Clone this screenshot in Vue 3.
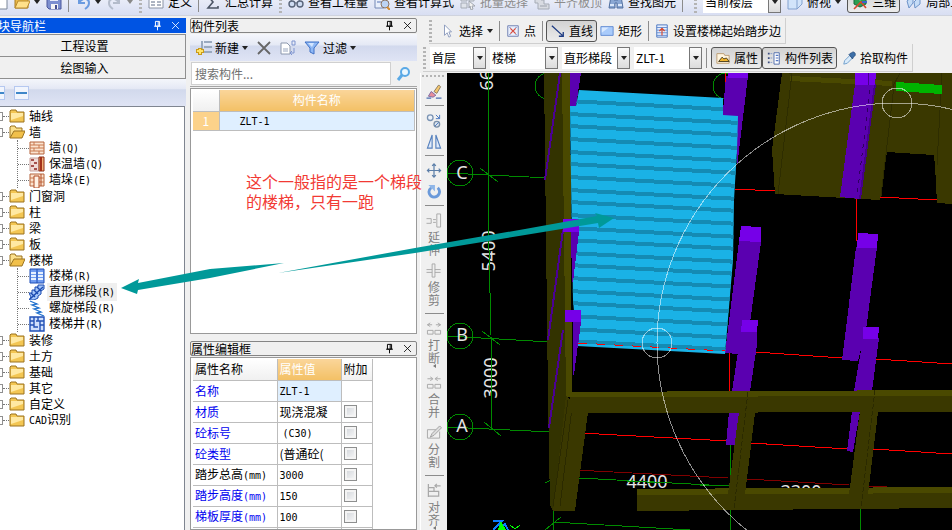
<script setup>
import { h, ref } from 'vue'

// 图标路径，统一 16x16 画布
const icons = {
  doc: '<path d="M1 1h10l4 4v10H1z" fill="#fff" stroke="#7a8699"/>',
  folder: '<path d="M1 14V3h5l1 2h7v9z" fill="#e9b949" stroke="#a87a20"/><path d="M1 14 4 7h12l-3 7z" fill="#ffe08a" stroke="#b98a2c"/>',
  save: '<path d="M1 1h14v14H3l-2-2z" fill="#7c8fd0" stroke="#4a569c"/><path d="M4 2h8v5H4z" fill="#e8ecfa"/><path d="M5 10h7v5H5z" fill="#f4f4f4"/><path d="M9 11h2v4H9z" fill="#444e90"/>',
  undo: '<path d="M4 3v6h6M4 9c3-6 10-5 10 0 0 2-1 4-4 6" fill="none" stroke="#6b9be0" stroke-width="2"/>',
  redo: '<path d="M12 3v6H6M12 9C9 3 2 4 2 9c0 2 1 4 4 6" fill="none" stroke="#b4bccb" stroke-width="2"/>',
  define: '<path d="M1 1h14v13H1z" fill="#fff" stroke="#8a93a5"/><path d="M3 8h4M3 11h4M9 8h4M9 11h4M9 5h4" stroke="#5d6b85" stroke-width="1"/>',
  sigma: '<path d="M13 4V2H3l5 6-5 6h10v-2" fill="none" stroke="#4c5566" stroke-width="1.6"/>',
  glasses: '<circle cx="4" cy="10" r="3" fill="#cfdcf2" stroke="#59657a" stroke-width="1.4"/><circle cx="12" cy="10" r="3" fill="#cfdcf2" stroke="#59657a" stroke-width="1.4"/><path d="M3 7 5 3M11 7l2-4M7 9h2" stroke="#59657a"/>',
  formula: '<path d="M1 1h9v13H1z" fill="#e9effb" stroke="#7488b5"/><path d="M3 5h5M3 8h4" stroke="#5773b5"/><circle cx="11" cy="10" r="4" fill="#bcd3f4" stroke="#8a7466"/><path d="m13 13 3 3" stroke="#d58a2e" stroke-width="2"/>',
  batch: '<path d="M1 2h6v5H1zM1 9h6v5H1zM9 2h5v5H9z" fill="#dfe3ea" stroke="#a5abb5"/><path d="m9 7 6 5h-3l1 3-2 1-1-4-1 2z" fill="#f2f2f2" stroke="#a0a5ae"/>',
  level: '<path d="M1 2h6v4h3v4h5v5H4V9H1z" fill="#d8dbe2" stroke="#a5abb5"/><path d="M6 12h7M10 4h5" stroke="#9ba1ac"/>',
  find: '<path d="M3 2h3v4h4V2h3l2 12H9V9H7v5H1z" fill="#8ba7d3" stroke="#516f9f"/><path d="M2 11h4M10 11h4" stroke="#dbe7fa" stroke-width="2"/>',
  cube: '<path d="M1 5 6 1h9v9l-5 5H1z" fill="#d2e4fa" stroke="#83a2cf"/><path d="M1 5h9v10M10 5l5-4" fill="none" stroke="#83a2cf"/>',
  view3d: '<path d="m8 1 6 3v6l-6 3-6-3V4z" fill="#2c9e50" stroke="#17693a"/><path d="M2 15 9 8l5 6" fill="none" stroke="#d7472d" stroke-width="1.6"/><path d="m4 4 4 2 5-2" fill="none" stroke="#b6e8c4"/><path d="M10 8h5" stroke="#3f62c9" stroke-width="2"/>',
  part3d: '<path d="m1 7 6-5v7l-4 5zM8 8l6-6v8l-5 4z" fill="#c5dcf7" stroke="#6d93c9"/>',
  cursor: '<path d="m4 1 8 8H9l2 5-2 1-2-5-3 3z" fill="#fff" stroke="#8394b8"/>',
  point: '<path d="M2 2h12v12H2z" fill="#e9effc" stroke="#6677ad"/><path d="m5 5 6 6M11 5l-6 6" stroke="#d4483b" stroke-width="1.4"/><path d="M4 4h1M11 4h1M4 12h1M11 12h1" stroke="#3755a8"/>',
  line: '<path d="m1 2 12 11M14 9v5H9" fill="none" stroke="#1d3b82" stroke-width="1.5"/>',
  rect: '<path d="M1 3h14v10H1z" fill="#a9cbfb" stroke="#5a86cf"/><path d="M2 4h8L2 10z" fill="#d9e9ff"/>',
  stair: '<path d="M2 1h12v14H2z" fill="#e8f0ff" stroke="#3e6dbb"/><path d="M2 4h12M2 7h12M2 10h12M2 13h12" stroke="#5a86cf"/><path d="M8 13V5M5 8l3-3 3 3" fill="none" stroke="#d9472b" stroke-width="1.3"/>',
  prop: '<path d="M1 3h8l1 2h5v9H1z" fill="#fff5df" stroke="#b9976b"/><path d="m3 12 4-5 2 2 3-1 3 4z" fill="#f1b52f" stroke="#3f3417"/>',
  list: '<path d="M8 2h6v13H8z" fill="#fff" stroke="#4664a6"/><path d="M10 5h3M10 8h3M10 11h3" stroke="#5678c4" stroke-width="1.4"/><path d="M1 3h2M1 8h2M1 13h2" stroke="#394c80" stroke-width="2"/><path d="M4 3h2M4 8h2M4 13h2" stroke="#7b93c8"/>',
  picker: '<path d="m2 15 1-4 6-6 3 3-6 6z" fill="#d9ebfb" stroke="#6899c8"/><path d="m8 4 4 5 1-2 2-2c1-3-2-5-4-3L9 3z" fill="#3d6fa8" stroke="#2b5180"/>',
  brush: '<path d="m8 8 5-7 2 2-4 7z" fill="#f5c86e" stroke="#8a7a60"/><path d="m5 8 5 4-3 2-5-1z" fill="#e68f9b" stroke="#7c6ba3"/><path d="M0 15h5M10 15h6" stroke="#4a6db0" stroke-width="1.4"/>',
  copy: '<circle cx="4" cy="5" r="3" fill="#eef3fa" stroke="#7a93b3" stroke-width="1.4"/><circle cx="11" cy="12" r="3" fill="#dce5ef" stroke="#7a8fa8" stroke-width="1.4"/><path d="m10 2 4 4M14 2v4h-4M9 14l4-4" fill="none" stroke="#4474c0"/>',
  mirror: '<path d="M6 1v14H1zM10 1v14h5z" fill="#dfeafa" stroke="#5580bd" stroke-width="1.2"/>',
  move: '<path d="M8 1v14M1 8h14M6 3l2-2 2 2M6 13l2 2 2-2M3 6 1 8l2 2M13 6l2 2-2 2" fill="none" stroke="#5b7ea8" stroke-width="1.3"/>',
  rotate: '<path d="M5 4c-5 4-1 10 3 10 5 0 8-6 4-10" fill="none" stroke="#6b9ada" stroke-width="3"/><path d="M2 1h7v7z" fill="#8fb6e8"/>',
  extend: '<path d="M0 6h5v5H0M7 7h3M7 10h3M11 1h4v14h-4z" fill="none" stroke="#a8a8a8"/>',
  trim: '<path d="M6 1h3v14H6zM0 7h6M0 10h6M9 7h6M9 10h6" fill="none" stroke="#a8a8a8"/>',
  break: '<path d="M1 10h6v4H1zM9 10h6v4H9zM1 4h5M10 4h5M4 2 1 4l3 2M12 2l3 2-3 2" fill="none" stroke="#a8a8a8"/>',
  merge: '<path d="M1 10h6v4H1zM9 10h6v4H9zM1 4h5M10 4h5M4 2l3 2-3 2M12 2 9 4l3 2" fill="none" stroke="#a8a8a8"/>',
  split: '<path d="M1 5h9M1 5v9h13V7" fill="none" stroke="#a8a8a8"/><path d="m4 13 2-4 8-8 2 2-8 8z" fill="#ddd" stroke="#a0a0a0"/>',
  align: '<path d="M2 1v14M2 5h6v4H2M2 9h11v5H2M15 3H9M11 1 9 3l2 2" fill="none" stroke="#a8a8a8" stroke-width="1.3"/>',
  add: '<path d="M8 2h8M8 7h8M8 12h8M6 1v12" stroke="#9aa9bf" stroke-width="2"/><path d="M4 8v7M0 11h8" stroke="#c99a1c" stroke-width="4"/><path d="M4 9v5M1 11h6" stroke="#ffe46a" stroke-width="2"/>',
  del: '<path d="m2 2 12 12M14 2 2 14" stroke="#666" stroke-width="1.8"/>',
  dup: '<path d="M1 3h6l3 3v8H1z" fill="#fff" stroke="#8c98ad"/><path d="M3 8h5v4H3z" fill="#ccd3df"/><path d="M12 1h3v4h-3zM14 8v5h-4M12 11l-2 2 2 2" fill="none" stroke="#7d93cf"/>',
  filter: '<path d="M1 2h14l-5 6v6l-4-2V8z" fill="#8fb8f5" stroke="#3f70c6"/><path d="M4 3h6L8 7z" fill="#d3e5ff"/>',
  search: '<circle cx="9" cy="6" r="4" fill="#eaf7ff" stroke="#5aa9e6" stroke-width="2"/><path d="m6 9-4 5" stroke="#5aa9e6" stroke-width="3"/>',
  pin: '<path d="M5 2h6v7H5zM9 2v7M3 9h10M8 10v5" fill="none" stroke="currentColor" stroke-width="1.4"/>',
  close: '<path d="m3 3 10 10M13 3 3 13" stroke="currentColor" stroke-width="1.2"/>',
  dirClosed: '<path d="M1 14V3l1-1h5l1 2h7v10z" fill="#f3c653" stroke="#9b7320"/><path d="M2 5h12v3L2 12z" fill="#ffe9a3"/>',
  dirOpen: '<path d="M1 14V3l1-1h4l1 2h6v3" fill="#fbe08c" stroke="#9b7320"/><path d="m1 14 4-7h11l-3 7z" fill="#f1c04a" stroke="#9b7320"/>',
  wall: '<path d="M1 2h14v12H1z" fill="#fbe3cf" stroke="#b5633a"/><path d="M1 5h14M1 8h14M1 11h14M5 2v3M10 5v3M5 8v3M10 11v3" stroke="#c8794e"/>',
  warmWall: '<path d="M1 2h9v13H1z" fill="#eedad6" stroke="#c9a09a"/><path d="M2 4h3M5 7h3M2 10h3M5 13h3" stroke="#a5504c" stroke-width="2"/><path d="M10 1h5v14h-5z" fill="#f2b078" stroke="#8c2d16"/><path d="M12 1v14" stroke="#a33019" stroke-width="2"/>',
  pier: '<path d="M1 2h14v12H1z" fill="#fbe3cf" stroke="#b5633a"/><path d="M1 6h14M1 10h14" stroke="#c8794e"/><path d="M5 4h5v12H5z" fill="#fff1e4" stroke="#b04a24"/><path d="M12 2v12" stroke="#b04a24"/>',
  stairs: '<path d="M1 1h14v14H1z" fill="#6f9bf0" stroke="#1f4fb8"/><path d="M2 5h5M2 8h5M2 11h5M9 5h5M9 8h5M9 11h5" stroke="#e6f0ff" stroke-width="2"/><path d="M8 1v14" stroke="#1f4fb8"/>',
  flight: '<path d="M0 9h3V6h3V3h3V1h6v4l-3 2v3l-3 2v2l-4 2H0l2-3z" fill="#a6c7fa" stroke="#1a4ab0"/><path d="m2 9 4 4M5 6l4 4M8 3l4 4M1 15 14 3" stroke="#1a4ab0" stroke-width="1.4"/>',
  spiral: '<path d="M1 1l7 3-5 1 7 3-5 1 7 3-4 1 7 3" fill="none" stroke="#2474cf" stroke-width="1.3"/>',
  well: '<path d="M1 1h14v14H1z" fill="#cfdffc" stroke="#1f4fb8" stroke-width="1.4"/><path d="M1 5h4M1 9h4M11 5h4M11 9h4M5 1v10h4M7 5h4v10M9 1v4" fill="none" stroke="#2351b4" stroke-width="1.4"/>'
}

const Icon = (props) => h('svg', {
  class: 'icon',
  viewBox: '0 0 16 16',
  'aria-hidden': 'true',
  innerHTML: icons[props.name]
})
Icon.props = ['name']

// 左侧构件树
const tree = [
  { name: '轴线' },
  {
    name: '墙',
    children: [
      { name: '墙', key: '(Q)', icon: 'wall' },
      { name: '保温墙', key: '(Q)', icon: 'warmWall' },
      { name: '墙垛', key: '(E)', icon: 'pier' }
    ]
  },
  { name: '门窗洞' },
  { name: '柱' },
  { name: '梁' },
  { name: '板' },
  {
    name: '楼梯',
    children: [
      { name: '楼梯', key: '(R)', icon: 'stairs' },
      { name: '直形梯段', key: '(R)', icon: 'flight' },
      { name: '螺旋梯段', key: '(R)', icon: 'spiral' },
      { name: '楼梯井', key: '(R)', icon: 'well' }
    ]
  },
  { name: '装修' },
  { name: '土方' },
  { name: '基础' },
  { name: '其它' },
  { name: '自定义' },
  { prefix: 'CAD', name: '识别' }
]
const current = ref('直形梯段')

// 属性表
const props = ref([
  { name: '材质', value: '现浇混凝', extra: false },
  { name: '砼标号', code: '(C30)', indent: true, extra: false },
  { name: '砼类型', value: '(普通砼(', extra: false },
  { name: '踏步总高', unit: '(mm)', code: '3000', dark: true, extra: false },
  { name: '踏步高度', unit: '(mm)', code: '150', extra: false },
  { name: '梯板厚度', unit: '(mm)', code: '100', extra: false }
])

const combos = [
  { label: '楼层', value: '首层', cls: 'short' },
  { label: '构件分类', value: '楼梯' },
  { label: '构件类型', value: '直形梯段' },
  { label: '构件', value: 'ZLT-1' }
]

// 竖向编辑工具条
const editTools = [
  { icon: 'brush', label: '删除' },
  { line: true },
  { icon: 'copy', label: '复制' },
  { icon: 'mirror', label: '镜像' },
  { line: true },
  { icon: 'move', label: '移动' },
  { icon: 'rotate', label: '旋转' },
  { line: true },
  { icon: 'extend', text: '延伸' },
  { icon: 'trim', text: '修剪' },
  { line: true },
  { icon: 'break', text: '打断', more: true },
  { icon: 'merge', text: '合并' },
  { icon: 'split', text: '分割' },
  { line: true },
  { icon: 'align', text: '对齐', more: true }
]

// 踏步阴影线
const treads = Array.from({ length: 20 }, (_, i) => 101 + Math.round(i * 12.65))
</script>

<template>
  <div class="app">
    <header class="main-bar">
      <div class="main-row">
        <button class="tool half"><Icon name="doc" /></button>
        <button class="tool"><Icon name="folder" /><i class="caret"></i></button>
        <button class="tool"><Icon name="save" /></button>
        <span class="sep"></span>
        <button class="tool"><Icon name="undo" /><i class="caret"></i></button>
        <button class="tool"><Icon name="redo" /><i class="caret dim"></i></button>
        <span class="grip"></span>
        <button class="tool"><Icon name="define" />定义</button>
        <span class="sep"></span>
        <button class="tool"><Icon name="sigma" />汇总计算</button>
        <span class="grip"></span>
        <button class="tool"><Icon name="glasses" />查看工程量</button>
        <button class="tool"><Icon name="formula" />查看计算式</button>
        <button class="tool" disabled><Icon name="batch" />批量选择</button>
        <button class="tool" disabled><Icon name="level" />平齐板顶</button>
        <button class="tool"><Icon name="find" />查找图元</button>
        <span class="sep"></span>
        <span class="grip floor-grip"></span>
        <label class="combo wide">
          <select aria-label="显示楼层"><option>当前楼层</option></select>
          <span class="drop"><i class="caret"></i></span>
        </label>
        <button class="tool"><Icon name="cube" />俯视<i class="caret"></i></button>
        <button class="tool on"><Icon name="view3d" />三维</button>
        <button class="tool"><Icon name="part3d" />局部三维</button>
      </div>
    </header>

    <div class="body">
      <aside class="nav">
        <div class="nav-title">
          <span class="nav-name">模块导航栏</span>
          <button class="mini" aria-label="固定"><Icon name="pin" /></button>
          <button class="mini" aria-label="关闭"><Icon name="close" /></button>
        </div>
        <button class="nav-btn">工程设置</button>
        <button class="nav-btn">绘图输入</button>
        <div class="nav-tools">
          <button class="fold" aria-label="展开"></button>
          <button class="fold" aria-label="折叠"></button>
        </div>
        <ul class="tree">
          <li v-for="node in tree" :key="node.name">
            <div class="node">
              <span class="box"></span><span class="dots"></span>
              <Icon :name="node.children ? 'dirOpen' : 'dirClosed'" />
              <span class="label"><span v-if="node.prefix" class="code">{{ node.prefix }}</span>{{ node.name }}</span>
            </div>
            <ul v-if="node.children" class="kids">
              <li v-for="kid in node.children" :key="kid.name" class="kid">
                <span class="dots"></span>
                <Icon :name="kid.icon" />
                <span class="label" :class="{ picked: kid.name === current }" @click="current = kid.name">{{ kid.name }}<span class="code">{{ kid.key }}</span></span>
              </li>
            </ul>
          </li>
        </ul>
      </aside>

      <div class="docks">
        <section class="dock list-dock">
          <div class="dock-title">
            <span>构件列表</span>
            <button class="mini" aria-label="固定"><Icon name="pin" /></button>
            <button class="mini" aria-label="关闭"><Icon name="close" /></button>
          </div>
          <div class="dock-tools">
            <button class="tool"><Icon name="add" />新建<i class="caret"></i></button>
            <button class="tool" aria-label="删除"><Icon name="del" /></button>
            <button class="tool" aria-label="复制"><Icon name="dup" /></button>
            <button class="tool"><Icon name="filter" />过滤<i class="caret"></i></button>
          </div>
          <div class="search">
            <input type="text" placeholder="搜索构件..." aria-label="搜索构件">
            <button aria-label="搜索"><Icon name="search" /></button>
          </div>
          <div class="sheet">
            <table class="list">
              <thead>
                <tr><th class="num"></th><th class="gold">构件名称</th></tr>
              </thead>
              <tbody>
                <tr><td class="num">1</td><td class="item"><span class="code">ZLT-1</span></td></tr>
              </tbody>
            </table>
          </div>
        </section>

        <section class="dock prop-dock">
          <div class="dock-title">
            <span>属性编辑框</span>
            <button class="mini" aria-label="固定"><Icon name="pin" /></button>
            <button class="mini" aria-label="关闭"><Icon name="close" /></button>
          </div>
          <div class="sheet">
            <table class="props">
              <thead>
                <tr><th class="c1">属性名称</th><th class="c2 gold">属性值</th><th class="c3">附加</th></tr>
              </thead>
              <tbody>
                <tr><td class="pname">名称</td><td class="sel"><span class="code">ZLT-1</span></td><td></td></tr>
                <tr v-for="p in props" :key="p.name">
                  <td class="pname" :class="{ dark: p.dark }">{{ p.name }}<span v-if="p.unit" class="code">{{ p.unit }}</span></td>
                  <td :class="{ indent: p.indent }"><span v-if="p.code" class="code">{{ p.code }}</span>{{ p.value }}</td>
                  <td class="check"><input v-model="p.extra" type="checkbox" :aria-label="p.name + '附加'"></td>
                </tr>
                <tr><td></td><td></td><td></td></tr>
              </tbody>
            </table>
          </div>
        </section>
      </div>

      <main class="work">
        <div class="strip draw-strip">
          <span class="grip"></span>
          <button class="tool"><Icon name="cursor" />选择<i class="caret"></i></button>
          <span class="sep"></span>
          <button class="tool"><Icon name="point" />点</button>
          <span class="sep"></span>
          <button class="tool on"><Icon name="line" />直线</button>
          <button class="tool"><Icon name="rect" />矩形</button>
          <span class="sep"></span>
          <button class="tool"><Icon name="stair" />设置楼梯起始踏步边</button>
        </div>
        <div class="strip pick-strip">
          <span class="grip"></span>
          <label v-for="c in combos" :key="c.label" class="combo" :class="c.cls">
            <select :aria-label="c.label"><option>{{ c.value }}</option></select>
            <span class="drop"><i class="caret"></i></span>
          </label>
          <span class="sep"></span>
          <button class="tool on"><Icon name="prop" />属性</button>
          <button class="tool on list-btn"><Icon name="list" />构件列表</button>
          <button class="tool"><Icon name="picker" />拾取构件</button>
        </div>

        <div class="stage">
          <div class="edit-bar">
            <span class="hgrip"></span>
            <template v-for="(t, i) in editTools" :key="i">
              <span v-if="t.line" class="rule"></span>
              <button v-else class="edit" :aria-label="t.label || t.text">
                <Icon :name="t.icon" />
                <span v-if="t.text" class="vtext">{{ t.text }}</span>
                <i v-if="t.more" class="side-caret"></i>
              </button>
            </template>
          </div>

          <svg class="scene" viewBox="447 73 505 457" preserveAspectRatio="xMinYMin slice">
            <defs>
              <clipPath id="flight-clip">
                <path d="M579 90 723 98V115L738 116 737 150 734 200 733 260 725 354 577 346 573 300 571 180 570 106H576z" />
              </clipPath>
            </defs>
            <rect x="447" y="73" width="505" height="457" fill="#000" />

            <!-- 轴网 -->
            <g class="axis">
              <circle cx="460" cy="173" r="13" /><circle cx="460" cy="336" r="13" /><circle cx="460" cy="427" r="13" />
              <circle cx="548" cy="86" r="13" /><circle cx="726" cy="86" r="13" />
              <path d="M447 173 550 178M447 336 550 342M447 427 552 432M480 168l18 14M482 331l18 14M484 422l17 14" />
              <path d="M579 478 728 486M553 508V530M545 530l16-13M553 522 690 530M730 440 731 530M860 500 861 530M545 483l10-5M700 485h30" />
            </g>
            <g class="dims">
              <text x="462" y="179">C</text>
              <text x="462" y="341">B</text>
              <text x="462" y="432">A</text>
              <text transform="translate(495 251) rotate(-90)">5400</text>
              <text transform="translate(497 378) rotate(-90)">3000</text>
              <text transform="translate(493 70) rotate(-90)">6600</text>
              <text x="801" y="498">3300</text>
            </g>
            <path class="axis" d="M488 73 489 250 491 335 492 430" />
            <g class="red">
              <path d="M735 189 775 191M856 199V241M880 197 937 200M755 352 842 358M876 359 952 364M729 353V391M580 433 728 441M750 443 848 449M873 449 952 454M725 73V84" />
              <path class="deep" d="M575 470 728 478M747 479 849 485M866 486H887" />
            </g>

            <!-- 右上楼板 -->
            <path d="M782 73H952V204L937 203 935 166 934 155 887 152 880 200 775 194 772 150z" fill="#3a3800" />
            <path d="M790 76 892 81V86L790 81z" fill="#4a4900" />
            <path d="M789 73h3l-14 121M894 86l-13 110M900 73 893 86M942 73l-5 92" fill="none" stroke="#2e2d00" />
            <path d="M896 82 942 85V94L896 91z" fill="#00b400" />
            <path d="M855 84H875L860 199 840 197z" fill="#5a00b0" />
            <path d="M875 84 860 199" stroke="#46008c" stroke-width="2" />
            <path d="M870 90 857 196" stroke="#2e0060" stroke-dasharray="4 5" />
            <path d="M855 73H876L875 85H855z" fill="#7600e8" />
            <path d="M868 73v12" stroke="#46008c" />

            <!-- 柱 -->
            <path d="M726 76H748L737 167 735 116 722 122z" fill="#5a00b0" />
            <path d="M728 73H748V78H728z" fill="#7600e8" />
            <path d="M739 241 761 242 749 330 738 354 725 353z" fill="#5a00b0" />
            <path d="M741 226 761 227V242L739 241z" fill="#7600e8" />
            <path d="M741 332H757V345L750 391H732zM729 412H739L735 445H726z" fill="#5a00b0" />
            <path d="M742 320H758L757 332H741z" fill="#7600e8" />
            <path d="M856 247H877L866 330 858 361 842 360z" fill="#5a00b0" />
            <path d="M858 233 878 234 877 248H857z" fill="#7600e8" />
            <path d="M863 338H879L872 391H854zM852 411H860L853 452 847 451z" fill="#5a00b0" />
            <path d="M863 327H879L878 339H863z" fill="#7600e8" />

            <!-- 左侧梁 -->
            <path d="M544 73H564L566 397 553 511 550 505 548 400z" fill="#333300" />
            <path d="M562 73H570L572 397H566z" fill="#4a4900" />
            <path d="M560 73 545 180M563 230 548 340M563 330 549 428" fill="none" stroke="#4b0095" stroke-width="2" />
            <path d="M570 73H581L576 106H570zM572 231H580L573 282H572zM573 321H581L574 375H573z" fill="#5a00b0" />

            <!-- 下方梁 -->
            <path d="M566 396 588 412 575 511H553z" fill="#3a3800" />
            <path d="M568 400 553 506M573 400 560 506" stroke="#2b2a00" />
            <path d="M637 493 952 491V508L637 511z" fill="#3a3800" />
            <path d="M637 489 952 487V493L637 495z" fill="#4a4900" />
            <path d="M570 397 952 396V412L570 413z" fill="#3a3800" />
            <path d="M572 392 952 390V396L572 397z" fill="#4a4900" />
            <path d="M741 397H757L745 494V509H731L728 494z" fill="#3a3800" />
            <path d="M862 396H880L868 494V508H851L849 494z" fill="#3a3800" />
            <path d="M748 392 734 509M875 390 861 508" stroke="#2b2a00" stroke-dasharray="5 2" />

            <!-- 直形梯段 -->
            <g clip-path="url(#flight-clip)">
              <rect x="568" y="88" width="172" height="268" fill="#1ab2e6" />
              <path v-for="y in treads" :key="y" :d="`M568 ${y} L740 ${y + 9}`" stroke="#148bb4" stroke-width="4" />
            </g>
            <path d="M563 219H579V232H563zM565 310H581V322H565z" fill="#7600e8" />
            <path d="M571 232h8l-6 50h-1zM573 322h8l-3 24h-5z" fill="#5a00b0" />
            <path d="M578 343 725 351" stroke="#f00" stroke-dasharray="9 9" />

            <!-- 旋转观察圈 -->
            <g class="orbit">
              <circle cx="897" cy="343" r="240" />
              <circle cx="897" cy="103" r="15" />
              <circle cx="657" cy="343" r="15" />
            </g>
            <text class="len" x="647" y="488">4400</text>
            <path d="M627 481 667 483" stroke="#008a00" />
            <path d="M493 521h9l-9 9M499 530l6-6 3 6" fill="none" stroke="#0a7cff" stroke-width="2" />
            <path d="M498 530l3-9 5 9z" fill="#0f0" />
            <path d="M510 525l5 4 5-4" fill="none" stroke="#0f0" />
          </svg>
        </div>
      </main>
    </div>

    <!-- 批注 -->
    <p class="note">这个一般指的是一个梯段<br>的楼梯，只有一跑</p>
    <svg class="arrows" viewBox="0 0 500 90" aria-hidden="true">
      <path d="M158 63 295 38 405 19 477 6 475 3 494 8 479 18 478 13 405 25 295 43z" fill="#009999" />
      <path d="M1 78 19 69 18 73 90 59 164 53 90 68 18 80 17 84z" fill="#009999" />
    </svg>
  </div>
</template>

<style>
body {
  margin: 0;
  overflow: hidden;
}
</style>

<style scoped>
* {
  box-sizing: border-box;
}

.app {
  position: relative;
  display: flex;
  flex-direction: column;
  height: 100vh;
  overflow: hidden;
  background: #f0f0f0;
  color: #000;
  font: 12px/16px "Noto Sans CJK SC", sans-serif;
}

button,
input,
select {
  margin: 0;
  padding: 0;
  border: 0;
  background: none;
  color: inherit;
  font: inherit;
}

ul {
  margin: 0;
  padding: 0;
  list-style: none;
}

.icon {
  display: block;
  flex: none;
  width: 16px;
  height: 16px;
}

.code {
  font-family: "DejaVu Sans Mono", monospace;
  font-size: 10px;
}

.caret {
  flex: none;
  border: 3px solid transparent;
  border-top: 4px solid #222;
  border-bottom: 0;
}

.caret.dim {
  border-top-color: #888;
}

.sep {
  flex: none;
  width: 1px;
  height: 20px;
  background: #8c8c8c;
}

.grip {
  flex: none;
  width: 3px;
  height: 22px;
  background: repeating-linear-gradient(#b4b4b4 0 2px, transparent 2px 4px);
}

.tool {
  display: flex;
  flex: none;
  align-items: center;
  gap: 4px;
  white-space: nowrap;
}

.tool:disabled {
  color: #8d8d8d;
}

.tool.on {
  height: 22px;
  padding: 0 3px 0 4px;
  border: 1px solid #555;
  border-radius: 3px;
  background: linear-gradient(#d2d2d2, #ececec);
}

/* 顶部工具栏 */
.main-bar {
  display: flex;
  flex: none;
  align-items: flex-end;
  height: 16px;
  overflow: hidden;
  border-bottom: 1px solid #cfd3de;
  background: #dfe4f5;
}

.main-row {
  display: flex;
  flex: none;
  align-items: center;
  gap: 6px;
  height: 26px;
  background: linear-gradient(#f4f6fc, #d8def2);
}

.main-row .half {
  width: 8px;
  justify-content: flex-end;
}

.main-row .floor-grip {
  margin-left: 5px;
}

/* 下拉框 */
.combo {
  display: flex;
  flex: none;
  width: 68px;
  height: 22px;
  background: #fff;
}

.combo.short {
  width: 56px;
}

.combo.wide {
  width: 78px;
}

.combo select {
  flex: 1;
  min-width: 0;
  padding-left: 2px;
  appearance: none;
  outline: 0;
}

.drop {
  display: flex;
  flex: none;
  align-items: center;
  justify-content: center;
  width: 13px;
  border: 1px solid #777;
  background: linear-gradient(#fafafa, #dcdcdc);
  pointer-events: none;
}

.body {
  display: flex;
  flex: 1;
  min-height: 0;
  padding-top: 2px;
}

/* 模块导航栏 */
.nav {
  display: flex;
  flex: none;
  flex-direction: column;
  width: 190px;
  padding-right: 4px;
}

.nav-title {
  display: flex;
  flex: none;
  align-items: center;
  height: 15px;
  margin-bottom: 1px;
  padding-right: 2px;
  background: #0054e3;
  color: #fff;
}

.nav-name {
  flex: 1;
  margin-left: -14px;
}

.mini {
  flex: none;
  width: 18px;
}

.mini .icon {
  width: 11px;
  height: 11px;
  margin: 0 auto;
}

.nav-btn {
  flex: none;
  height: 22px;
  padding-right: 16px;
  border-top: 1px solid #8f8f8f;
  border-right: 1px solid #8f8f8f;
}

.nav-tools {
  display: flex;
  flex: none;
  align-items: center;
  gap: 9px;
  height: 28px;
  border-top: 1px solid #8f8f8f;
  background: linear-gradient(#f4f6fb, #e5e9f5 35%, #d2d9ec 40%, #dfe4f4);
}

.fold {
  width: 15px;
  height: 14px;
  border: 1px solid #b5c8f0;
  background: linear-gradient(#3f87c9, #3f87c9) center / 11px 2px no-repeat #f1f5fd;
}

.fold:first-child {
  width: 5px;
  border-left: 0;
}

.tree {
  flex: 1;
  min-height: 0;
  margin-right: 1px;
  padding-top: 1px;
  overflow: hidden;
  border-top: 1px solid #7f8590;
  border-right: 1px solid #7f8590;
  background: #fff;
}

.node,
.kid {
  display: flex;
  align-items: center;
  height: 16px;
}

.box {
  width: 3px;
  height: 9px;
  border: 1px solid #909090;
  border-left: 0;
}

.dots {
  width: 6px;
  border-top: 1px dotted #777;
}

.label {
  margin-left: 2px;
  padding: 0 2px;
  white-space: nowrap;
}

.kids {
  margin-left: 17px;
  border-left: 1px dotted #777;
}

.kid .dots {
  width: 11px;
}

.picked {
  background: #efefef;
}

/* 停靠面板 */
.docks {
  display: flex;
  flex: none;
  flex-direction: column;
  gap: 7px;
  width: 227px;
}

.dock {
  display: flex;
  flex-direction: column;
}

.list-dock {
  flex: none;
  height: 316px;
}

.prop-dock {
  flex: 1;
  min-height: 0;
}

.dock-title {
  display: flex;
  flex: none;
  align-items: center;
  height: 15px;
  border: 1px solid #858585;
  border-radius: 2px;
}

.dock-title span {
  flex: 1;
}

.dock-tools {
  display: flex;
  flex: none;
  align-items: center;
  gap: 8px;
  height: 27px;
  margin-top: 1px;
  padding-left: 6px;
  background: linear-gradient(#f5f7fc, #e5e9f5 40%, #d2d9ed 45%, #dfe4f5);
}

.dock-tools .tool {
  gap: 3px;
}

.search {
  display: flex;
  flex: none;
  align-items: center;
  height: 26px;
  border-bottom: 1px solid #a5a5a5;
}

.search input {
  flex: 1;
  min-width: 0;
  height: 23px;
  margin-left: 1px;
  padding: 0 3px;
  border: 1px solid #d0d0d0;
  background: #fff;
}

.search input::placeholder {
  color: #707070;
  opacity: 1;
}

.search button {
  flex: none;
  width: 26px;
}

.search .icon {
  margin: 0 auto;
}

.sheet {
  flex: 1;
  min-height: 0;
  margin-top: 1px;
  padding: 1px 1px 0 2px;
  overflow: hidden;
  border: 1px solid #999;
  background: #fff;
}

table {
  border-collapse: collapse;
  table-layout: fixed;
}

th,
td {
  padding: 0 2px;
  border-right: 1px solid #bdbdbd;
  border-bottom: 1px solid #bdbdbd;
  font-weight: normal;
  white-space: nowrap;
  overflow: hidden;
}

th {
  background: linear-gradient(#fff, #f0f0f0);
}

.gold {
  background: linear-gradient(#fad59a, #f3c065);
  color: #fff;
}

.list {
  width: 100%;
}

.list th {
  height: 21px;
}

.list td {
  height: 19px;
}

.list .num {
  width: 26px;
}

.list td.num {
  background: #fcd28a;
  color: #fff;
  text-align: center;
}

.list .item {
  padding-left: 20px;
  background: #dfefff;
}

.props {
  width: 179px;
}

.props th,
.props td {
  height: 21px;
  text-align: left;
}

.c1 {
  width: 84px;
}

.c2 {
  width: 64px;
}

.c3 {
  width: 31px;
}

.props .pname {
  color: #0000f0;
}

.props .dark {
  color: #000;
}

.props .sel {
  background: #dfefff;
}

.props .indent {
  padding-left: 5px;
}

.check input {
  display: block;
  width: 13px;
  height: 13px;
  appearance: none;
  border: 1px solid #8e8f8f;
  background: linear-gradient(135deg, #cfd3d8, #fafafa);
  box-shadow: inset 0 0 0 2px #f4f4f4;
}

.check input:checked {
  background: #3f70c6;
}

/* 绘图区 */
.work {
  display: flex;
  flex: 1;
  flex-direction: column;
  min-width: 0;
}

.strip {
  display: flex;
  flex: none;
  align-items: center;
  align-self: flex-start;
  border-right: 1px solid #cfcfcf;
  border-bottom: 1px solid #cfcfcf;
}

.strip .icon {
  width: 14px;
}

.draw-strip {
  gap: 6px;
  height: 26px;
  margin-left: 12px;
  padding-right: 4px;
}

.draw-strip .grip {
  margin-right: 3px;
}

.draw-strip .tool.on {
  margin: 0 -3px;
}

.pick-strip {
  gap: 4px;
  height: 28px;
  margin-left: 6px;
  padding-right: 4px;
}

.pick-strip .list-btn {
  margin: 0 1px 0 -4px;
}

.stage {
  display: flex;
  flex: 1;
  min-height: 0;
  margin-top: 1px;
}

.edit-bar {
  display: flex;
  flex: none;
  flex-direction: column;
  align-items: center;
  gap: 7px;
  width: 27px;
  margin-left: 3px;
  padding-top: 2px;
  overflow: hidden;
  border-left: 1px solid #fff;
}

.hgrip {
  flex: none;
  width: 24px;
  height: 2px;
  background: repeating-linear-gradient(90deg, #b4b4b4 0 2px, transparent 2px 4px);
}

.rule {
  flex: none;
  width: 19px;
  height: 1px;
  background: #8c8c8c;
}

.edit {
  display: flex;
  flex: none;
  flex-direction: column;
  align-items: center;
  color: #808080;
}

.edit .icon {
  height: 15px;
  margin-bottom: -1px;
}

.vtext {
  width: 12px;
  margin-top: 3px;
  line-height: 13px;
}

.side-caret {
  border: 2px solid transparent;
  border-right: 3px solid #777;
  border-left: 0;
}

.scene {
  flex: 1;
  min-width: 0;
  height: 100%;
  background: #000;
  shape-rendering: crispEdges;
}

.axis {
  fill: none;
  stroke: #008a00;
}

.dims text,
.len {
  fill: #e4e4e4;
  font: 18px "Noto Sans", sans-serif;
  text-anchor: middle;
}

.red {
  fill: none;
  stroke: #f00;
}

.red .deep {
  stroke: #800000;
}

.orbit {
  fill: none;
  stroke: #fff;
  stroke-opacity: 0.55;
}

.note {
  position: absolute;
  top: 171px;
  left: 246px;
  margin: 0;
  color: #f23a34;
  font-size: 16px;
  line-height: 20px;
  white-space: nowrap;
}

.arrows {
  position: absolute;
  top: 210px;
  left: 120px;
  width: 500px;
  height: 90px;
  pointer-events: none;
}
</style>
